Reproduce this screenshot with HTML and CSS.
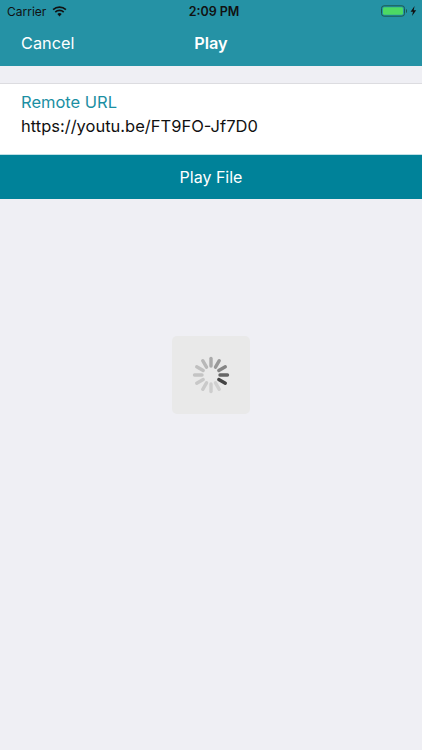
FILE: index.html
```html
<!DOCTYPE html>
<html lang="en">
<head>
    <meta charset="UTF-8">
    <meta name="viewport" content="width=device-width, initial-scale=1.0">
    <title>Play</title>
    <link rel="stylesheet" href="styles.css">
</head>
<body>
    <div class="header">
        <div class="status-bar">
            <div class="status-left">
                <span>Carrier</span>
                <svg class="wifi" width="15" height="11" viewBox="0 0 16 12">
                    <path d="M8 11.5 L5.6 8.7 A3.6 3.6 0 0 1 10.4 8.7 Z" fill="#111"/>
                    <path d="M3.4 6.6 A6.8 6.8 0 0 1 12.6 6.6" fill="none" stroke="#111" stroke-width="1.8"/>
                    <path d="M1 4 A10.4 10.4 0 0 1 15 4" fill="none" stroke="#111" stroke-width="1.8"/>
                </svg>
            </div>
            <div class="status-time">2:09 PM</div>
            <div class="status-right">
                <svg width="36" height="12" viewBox="0 0 36 12">
                    <rect x="0.5" y="0.8" width="23" height="10.4" rx="2.6" fill="none" stroke="#1c5a50" stroke-width="1"/>
                    <rect x="2" y="2.2" width="20" height="7.6" rx="1.4" fill="#4cd964"/>
                    <rect x="25" y="4.4" width="1" height="3.2" fill="#1c5a50"/>
                    <path d="M33.6 1 L29.6 6.8 H32 L31 11 L35.2 5.2 H32.7 Z" fill="#111"/>
                </svg>
            </div>
        </div>
        <div class="nav-bar">
            <span class="nav-cancel">Cancel</span>
            <span class="nav-title">Play</span>
        </div>
    </div>

    <div class="field">
        <div class="field-label">Remote URL</div>
        <div class="field-value">https://youtu.be/FT9FO-Jf7D0</div>
    </div>
    <div class="play-button">Play File</div>

    <div class="content">
        <div class="spinner-box">
            <svg width="40" height="40" viewBox="-20 -20 40 40">
                <g stroke-width="3.4" stroke-linecap="round" fill="none">
                    <line x1="9" y1="0" x2="16.5" y2="0" stroke="#666" transform="rotate(0)"/>
                    <line x1="9" y1="0" x2="16.5" y2="0" stroke="#444" transform="rotate(30)"/>
                    <line x1="9" y1="0" x2="16.5" y2="0" stroke="#d0d0d0" transform="rotate(60)"/>
                    <line x1="9" y1="0" x2="16.5" y2="0" stroke="#cdcdcd" transform="rotate(90)"/>
                    <line x1="9" y1="0" x2="16.5" y2="0" stroke="#cacaca" transform="rotate(120)"/>
                    <line x1="9" y1="0" x2="16.5" y2="0" stroke="#c8c8c8" transform="rotate(150)"/>
                    <line x1="9" y1="0" x2="16.5" y2="0" stroke="#c4c4c4" transform="rotate(180)"/>
                    <line x1="9" y1="0" x2="16.5" y2="0" stroke="#c0c0c0" transform="rotate(210)"/>
                    <line x1="9" y1="0" x2="16.5" y2="0" stroke="#b8b8b8" transform="rotate(240)"/>
                    <line x1="9" y1="0" x2="16.5" y2="0" stroke="#aaa" transform="rotate(270)"/>
                    <line x1="9" y1="0" x2="16.5" y2="0" stroke="#999" transform="rotate(300)"/>
                    <line x1="9" y1="0" x2="16.5" y2="0" stroke="#858585" transform="rotate(330)"/>
                </g>
            </svg>
        </div>
    </div>
</body>
</html>
```

FILE: styles.css
```css
body {
    font-family: Inter, "Liberation Sans", sans-serif;
    background-color: #efeff4;
    margin: 0;
    padding: 0;
    height: 750px;
    display: flex;
    flex-direction: column;
    overflow: hidden;
}

.header {
    background-color: #2592a5;
    height: 66px;
    flex-shrink: 0;
}

.status-bar {
    height: 22px;
    display: flex;
    align-items: center;
    padding: 0 7px;
    font-size: 12px;
    color: #111;
}

.status-left {
    flex: 1;
    display: flex;
    align-items: center;
    gap: 6px;
}

.status-time {
    font-weight: 600;
    font-size: 12.5px;
    margin-left: 4px;
}

.status-right {
    flex: 1;
    display: flex;
    align-items: center;
    justify-content: flex-end;
    margin-right: -2px;
}

.nav-bar {
    height: 42px;
    display: flex;
    align-items: center;
    justify-content: center;
    position: relative;
    color: #fff;
}

.nav-cancel {
    position: absolute;
    left: 21px;
    font-size: 16.3px;
}

.nav-title {
    font-size: 16.3px;
    font-weight: 600;
}

.field {
    margin-top: 17px;
    background-color: #fff;
    border-top: 1px solid #dcdce0;
    height: 71px;
    padding: 8px 21px 0;
    box-sizing: border-box;
    flex-shrink: 0;
}

.field-label {
    color: #1b8fa3;
    font-size: 16.5px;
    line-height: 20px;
}

.field-value {
    color: #111;
    font-size: 16.5px;
    line-height: 28px;
}

.play-button {
    background-color: #008299;
    color: #fff;
    font-size: 16px;
    height: 45px;
    display: flex;
    align-items: center;
    justify-content: center;
    flex-shrink: 0;
    border-top: 1px solid #bfe0e6;
    box-sizing: border-box;
}

.content {
    flex: 1;
    display: flex;
    justify-content: center;
    padding-top: 137px;
}

.spinner-box {
    width: 78px;
    height: 78px;
    background-color: #e9e9e9;
    border-radius: 5px;
    display: flex;
    align-items: center;
    justify-content: center;
}
```
